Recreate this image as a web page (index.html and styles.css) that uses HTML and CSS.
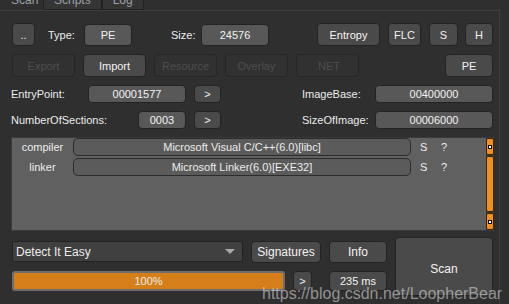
FILE: index.html
```html
<html>
<head>
	<title>Detect It Easy</title>
	<link rel="stylesheet" href="styles.css">
</head>
<body>
	<div class="tabs">
		<div class="tab active">Scan</div>
		<div class="tab">Scripts</div>
		<div class="tab">Log</div>
	</div>
	<div class="panel">
		<div class="row row-top">
			<div class="btn w-dots">..</div>
			<div class="label w-type">Type:</div>
			<div class="field w-pe">PE</div>
			<div class="label w-size">Size:</div>
			<div class="field w-num">24576</div>
			<div class="btn w-entropy">Entropy</div>
			<div class="btn w-flc">FLC</div>
			<div class="btn w-s">S</div>
			<div class="btn w-h">H</div>
		</div>
		<div class="row row-top">
			<div class="btn off w-tool first">Export</div>
			<div class="btn w-tool">Import</div>
			<div class="btn off w-tool">Resource</div>
			<div class="btn off w-tool">Overlay</div>
			<div class="btn off w-tool">.NET</div>
			<div class="grow"></div>
			<div class="btn w-pe2">PE</div>
		</div>
		<div class="row row-info">
			<div class="label w-ep">EntryPoint:</div>
			<div class="field w-ep-val">00001577</div>
			<div class="btn w-go">&gt;</div>
			<div class="label w-hdr-label">ImageBase:</div>
			<div class="field w-hdr">00400000</div>
		</div>
		<div class="row row-info">
			<div class="label w-nos">NumberOfSections:</div>
			<div class="field w-nos-val">0003</div>
			<div class="btn w-go">&gt;</div>
			<div class="label w-hdr-label">SizeOfImage:</div>
			<div class="field w-hdr">00006000</div>
		</div>

		<div class="list">
			<div class="list-body">
				<div class="entry">
					<div class="entry-type">compiler</div>
					<div class="entry-name">Microsoft Visual C/C++(6.0)[libc]</div>
					<div class="entry-s">S</div>
					<div class="entry-q">?</div>
				</div>
				<div class="entry">
					<div class="entry-type">linker</div>
					<div class="entry-name">Microsoft Linker(6.0)[EXE32]</div>
					<div class="entry-s">S</div>
					<div class="entry-q">?</div>
				</div>
			</div>
			<div class="scrollbar">
				<div class="sb-btn"><span></span></div>
				<div class="sb-handle"></div>
				<div class="sb-btn"><span></span></div>
			</div>
		</div>

		<div class="bottom">
			<div class="bottom-left">
				<div class="row row-sel">
					<div class="combo">
						<span>Detect It Easy</span>
						<span class="arrow"></span>
					</div>
					<div class="btn w-sig">Signatures</div>
					<div class="btn w-info">Info</div>
				</div>
				<div class="row row-prog">
					<div class="progress">100%</div>
					<div class="btn w-small">&gt;</div>
					<div class="btn w-time">235 ms</div>
				</div>
			</div>
			<div class="btn scan">Scan</div>
		</div>
		<div class="watermark">https://blog.csdn.net/LoopherBear</div>
	</div>
</body>
</html>
```

FILE: styles.css
```css
body {
	margin: 0;
	width: 509px;
	height: 304px;
	overflow: hidden;
	background: #2f2f2f;
	font-family: "Liberation Sans", Arial, sans-serif;
	font-size: 11px;
	color: #ececec;
}

.tabs {
	display: flex;
	height: 18px;
	margin-top: -8px;
	margin-left: 0;
}

.tab {
	box-sizing: border-box;
	height: 18px;
	padding: 0 10px;
	line-height: 15px;
	font-size: 12px;
	color: #9aa0a8;
	background: #353535;
	border: 1px solid #222;
}

.tab.active {
	width: 43px;
	background: #2f2f2f;
	border-color: #2f2f2f;
}

.panel {
	position: relative;
	box-sizing: border-box;
	width: 500px;
	height: 300px;
	border-top: 1px solid #3f3f3f;
	border-right: 1px solid #3f3f3f;
	padding: 12px 6px 0 12px;
}

.row {
	display: flex;
	align-items: center;
}

.row-top {
	height: 23px;
	margin-bottom: 8px;
}

.row-info {
	height: 18px;
	margin-bottom: 8px;
}

.btn, .field {
	box-sizing: border-box;
	display: flex;
	align-items: center;
	justify-content: center;
	border: 1px solid #232323;
	border-radius: 4px;
	background: #4a4a4a;
	color: #f2f2f2;
}

.field {
	background: #585858;
	height: 22px;
}

.row-top .btn {
	height: 23px;
}

.btn.off {
	background: #313131;
	border-color: #262626;
	color: #4e4e4e;
}

.label {
	white-space: nowrap;
}

.grow {
	flex: 1;
}

.w-dots { width: 23px; }
.w-type { width: 36px; margin-left: 13px; }
.w-pe { width: 48px; }
.w-size { width: 30px; margin-left: 39px; }
.w-num { width: 68px; }
.w-entropy { width: 63px; margin-left: 48px; }
.w-flc { width: 33px; margin-left: 8px; }
.w-s { width: 29px; margin-left: 8px; }
.w-h { width: 28px; margin-left: 7px; }

.w-tool { width: 63px; margin-left: 8px; }
.w-tool.first { margin-left: 0; }
.w-pe2 { width: 48px; }

.row-info .field, .row-info .btn { height: 18px; }
.w-ep { width: 77px; margin-left: -1px; }
.w-ep-val { width: 98px; }
.w-nos { width: 127px; margin-left: -1px; }
.w-nos-val { width: 48px; }
.w-go { width: 27px; margin-left: 8px; }
.w-hdr-label { width: 73px; margin-left: 81px; }
.w-hdr { width: 118px; }

.list {
	box-sizing: border-box;
	display: flex;
	width: 483px;
	height: 94px;
	margin-left: -1px;
	background: #606060;
	border: 1px solid #3a3a3a;
	border-right: none;
}

.list-body {
	flex: 1;
}

.entry {
	display: flex;
	align-items: center;
	height: 18px;
	margin-bottom: 2px;
}

.entry-type {
	width: 61px;
	text-align: center;
}

.entry-name {
	box-sizing: border-box;
	width: 338px;
	height: 18px;
	line-height: 16px;
	text-align: center;
	border: 1px solid #2c2c2c;
	border-radius: 5px;
	background: #5b5b5b;
}

.entry-s { margin-left: 9px; width: 21px; }
.entry-q { width: 10px; }

.scrollbar {
	display: flex;
	flex-direction: column;
	width: 8px;
	background: #3b3b3b;
}

.sb-btn, .sb-handle {
	box-sizing: border-box;
	background: #f0911f;
	border: 1px solid #3a2408;
	border-radius: 2px;
}

.sb-btn {
	height: 17px;
	display: flex;
	align-items: center;
	justify-content: center;
}

.sb-btn span {
	width: 2px;
	height: 2px;
	border: 1px solid #111;
	background: #fff;
}

.sb-handle {
	flex: 1;
	margin: 1px 0;
}

.bottom {
	display: flex;
	margin-top: 6px;
}

.bottom-left {
	display: flex;
	flex-direction: column;
}

.row-sel {
	height: 23px;
	margin-top: 3px;
}

.combo {
	box-sizing: border-box;
	display: flex;
	align-items: center;
	justify-content: space-between;
	width: 231px;
	height: 21px;
	padding: 0 7px 0 3px;
	font-size: 12px;
	background: #404040;
	border: 1px solid #232323;
	border-radius: 2px;
}

.arrow {
	width: 0;
	height: 0;
	border-left: 5px solid transparent;
	border-right: 5px solid transparent;
	border-top: 5px solid #a8a8a8;
}

.w-sig { width: 70px; height: 22px; margin-left: 8px; font-size: 12px; }
.w-info { width: 58px; height: 22px; margin-left: 8px; font-size: 12px; }

.row-prog {
	height: 20px;
	margin-top: 8px;
}

.progress {
	box-sizing: border-box;
	width: 273px;
	height: 20px;
	line-height: 17px;
	text-align: center;
	background: #d67f1a;
	border: 2px solid #6e6e6e;
	border-radius: 3px;
}

.w-small { width: 19px; height: 20px; margin-left: 8px; }
.w-time { width: 58px; height: 20px; margin-left: 17px; }

.scan {
	width: 98px;
	height: 59px;
	margin-left: 8px;
	padding-top: 4px;
	font-size: 12px;
}

.watermark {
	position: absolute;
	left: 262px;
	top: 274px;
	font-family: "Liberation Sans", Arial, sans-serif;
	font-size: 16px;
	color: rgba(215, 215, 215, 0.6);
	white-space: nowrap;
}
```
